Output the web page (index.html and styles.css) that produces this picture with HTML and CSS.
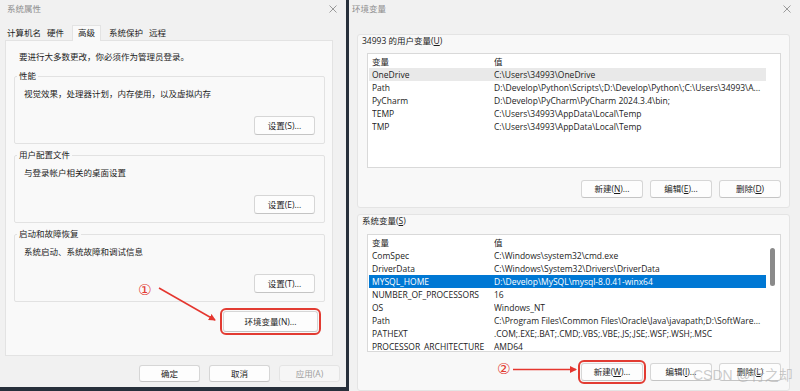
FILE: index.html
```html
<!DOCTYPE html>
<html lang="zh-CN">
<head>
    <meta charset="UTF-8">
    <title>系统属性 / 环境变量</title>
    <link rel="stylesheet" href="styles.css">
</head>
<body>
    <div class="desk">
        <!-- 系统属性 -->
        <section class="dlg sys">
            <header class="title">
                <span>系统属性</span>
                <svg class="close" width="8" height="8" viewBox="0 0 8 8"><path d="M0.5 0.5L7.5 7.5M7.5 0.5L0.5 7.5"/></svg>
            </header>
            <nav class="tabs">
                <span>计算机名</span><span>硬件</span><span class="on">高级</span><span>系统保护</span><span>远程</span>
            </nav>
            <div class="panel">
                <p class="note">要进行大多数更改，你必须作为管理员登录。</p>
                <fieldset class="grp">
                    <legend>性能</legend>
                    <p>视觉效果，处理器计划，内存使用，以及虚拟内存</p>
                    <div class="act"><button class="btn">设置(S)...</button></div>
                </fieldset>
                <fieldset class="grp">
                    <legend>用户配置文件</legend>
                    <p>与登录帐户相关的桌面设置</p>
                    <div class="act"><button class="btn">设置(E)...</button></div>
                </fieldset>
                <fieldset class="grp">
                    <legend>启动和故障恢复</legend>
                    <p>系统启动、系统故障和调试信息</p>
                    <div class="act"><button class="btn">设置(T)...</button></div>
                </fieldset>
                <div class="act env-act"><button class="btn big mark">环境变量(N)...</button></div>
            </div>
            <footer class="foot">
                <button class="btn">确定</button>
                <button class="btn">取消</button>
                <button class="btn" disabled>应用(A)</button>
            </footer>
        </section>

        <!-- 环境变量 -->
        <section class="dlg env">
            <header class="title">
                <span>环境变量</span>
                <svg class="close" width="8" height="8" viewBox="0 0 8 8"><path d="M0.5 0.5L7.5 7.5M7.5 0.5L0.5 7.5"/></svg>
            </header>
            <div class="env-body">
                <div class="box">
                    <div class="cap">34993 的用户变量(<u>U</u>)</div>
                    <div class="list user">
                        <div class="rows">
                            <div class="row"><span>变量</span><span>值</span></div>
                            <div class="row hl"><span>OneDrive</span><span>C:\Users\34993\OneDrive</span></div>
                            <div class="row"><span>Path</span><span>D:\Develop\Python\Scripts\;D:\Develop\Python\;C:\Users\34993\A...</span></div>
                            <div class="row"><span>PyCharm</span><span>D:\Develop\PyCharm\PyCharm 2024.3.4\bin;</span></div>
                            <div class="row"><span>TEMP</span><span>C:\Users\34993\AppData\Local\Temp</span></div>
                            <div class="row"><span>TMP</span><span>C:\Users\34993\AppData\Local\Temp</span></div>
                        </div>
                        <div class="sb"></div>
                    </div>
                    <div class="act btns">
                        <button class="btn">新建(<u>N</u>)...</button>
                        <button class="btn">编辑(<u>E</u>)...</button>
                        <button class="btn">删除(<u>D</u>)</button>
                    </div>
                </div>
                <div class="box sysvars">
                    <div class="cap">系统变量(<u>S</u>)</div>
                    <div class="list system">
                        <div class="rows">
                            <div class="row"><span>变量</span><span>值</span></div>
                            <div class="row"><span>ComSpec</span><span>C:\Windows\system32\cmd.exe</span></div>
                            <div class="row"><span>DriverData</span><span>C:\Windows\System32\Drivers\DriverData</span></div>
                            <div class="row sel"><span>MYSQL_HOME</span><span>D:\Develop\MySQL\mysql-8.0.41-winx64</span></div>
                            <div class="row"><span>NUMBER_OF_PROCESSORS</span><span>16</span></div>
                            <div class="row"><span>OS</span><span>Windows_NT</span></div>
                            <div class="row"><span>Path</span><span>C:\Program Files\Common Files\Oracle\Java\javapath;D:\SoftWare...</span></div>
                            <div class="row"><span>PATHEXT</span><span>.COM;.EXE;.BAT;.CMD;.VBS;.VBE;.JS;.JSE;.WSF;.WSH;.MSC</span></div>
                            <div class="row"><span>PROCESSOR_ARCHITECTURE</span><span>AMD64</span></div>
                        </div>
                        <div class="sb"><div class="thumb"></div></div>
                    </div>
                    <div class="act btns">
                        <button class="btn mark">新建(<u>W</u>)...</button>
                        <button class="btn">编辑(<u>I</u>)...</button>
                        <button class="btn">删除(<u>L</u>)</button>
                    </div>
                </div>
            </div>
        </section>

        <!-- 标注 -->
        <svg class="notes" width="800" height="391" viewBox="0 0 800 391">
            <defs>
                <marker id="tip" markerWidth="8" markerHeight="8" refX="6" refY="4" orient="auto" markerUnits="userSpaceOnUse">
                    <path d="M0 0.5L7 4L0 7.5Z" fill="#e5362f"/>
                </marker>
            </defs>
            <line x1="159" y1="288" x2="215" y2="320" marker-end="url(#tip)"/>
            <line x1="513" y1="369.5" x2="576" y2="369.5" marker-end="url(#tip)"/>
        </svg>
        <span class="num n1">①</span>
        <span class="num n2">②</span>
        <span class="wm">CSDN @行之却</span>
    </div>
</body>
</html>
```

FILE: styles.css
```css
* { box-sizing: border-box; }
html, body { margin: 0; padding: 0; }
body {
    width: 800px; height: 391px; overflow: hidden;
    background: #27303b;
    font-family: "Open Sans", "Noto Sans CJK SC", sans-serif;
    font-size: 8.5px; color: #1c1c1c;
}
.desk { position: relative; display: flex; gap: 3px; height: 391px; }

/* ---------- 对话框公共 ---------- */
.dlg { background: #f1f1f1; display: flex; flex-direction: column; }
.sys { width: 346px; height: 387px; }
.env { flex: 1; height: 391px; }
.title {
    display: flex; justify-content: space-between; align-items: center;
    height: 17px; padding: 0 9px 0 7px; color: #8e8e8e; line-height: 12px;
}
.env .title { padding: 0 9px 0 3px; }
.close path { stroke: #9a9a9a; stroke-width: 1; fill: none; }

.btn {
    font: inherit; color: #1c1c1c;
    background: #fdfdfd;
    border: 1px solid #d6d6d6; border-bottom-color: #c4c4c4;
    border-radius: 3px;
    padding: 0; width: 61px; height: 19px; line-height: 15px;
}
.btn:disabled { color: #9d9d9d; background: #f6f6f6; border-color: #e4e4e4; }
.btn u { text-underline-offset: 1px; }
.mark { outline: 2px solid #e23b32; outline-offset: 1px; }
.act { display: flex; justify-content: flex-end; }

/* ---------- 系统属性 ---------- */
.tabs {
    display: flex; align-items: flex-start;
    height: 15px; margin-top: 8px; padding-left: 4px;
    line-height: 15px; position: relative; z-index: 1;
}
.tabs span { padding: 0 3px; }
.tabs .on {
    padding: 0 5px; margin: 0 5px; height: 16px;
    background: #f9f9f9; border: 1px solid #e3e3e3; border-bottom: none;
    line-height: 14px;
}
.panel {
    height: 316px; margin: 0 13px 0 5px;
    padding: 0 7px 0 8px;
    background: #f9f9f9; border: 1px solid #e3e3e3;
}
.note { margin: 0; padding: 10px 0 0 5px; line-height: 12px; }
.grp {
    margin: 5px 0 0; padding: 0 9px 8px;
    border: 1px solid #e2e2e2; border-radius: 2px;
}
.grp:first-of-type { margin-top: 7px; }
.grp legend { margin-left: -7px; padding: 0 2px; line-height: 12px; }
.grp p { margin: 6px 0 0; line-height: 12px; }
.grp .act { margin-top: 16px; }
.env-act { margin-top: 9px; padding-right: 7px; }
.env-act .btn { width: 95px; height: 21px; }
.foot { display: flex; justify-content: flex-end; gap: 9px; padding: 9px 6px 0 0; }
.foot .btn { height: 17px; line-height: 13px; }

/* ---------- 环境变量 ---------- */
.env-body { padding: 17px 10px 0 8px; flex: 1; display: flex; flex-direction: column; }
.box {
    background: #f8f8f8; border: 1px solid #e4e4e4; border-radius: 3px;
    padding: 0 8px 9px 9px;
}
.sysvars { margin-top: 6px; flex: 1; }
.cap { margin-left: -5px; line-height: 12px; }
.list {
    display: flex; margin-top: 6px; height: 115px;
    background: #fff; border: 1px solid #d9d9d9; padding: 1px;
    overflow: hidden;
}
.system { margin-top: 7px; height: 118px; }
.rows { flex: 1; min-width: 0; }
.row {
    display: grid; grid-template-columns: 122px 1fr;
    padding-left: 3px; line-height: 13px; height: 13px;
    white-space: nowrap; overflow: hidden;
}
.row span { overflow: hidden; }
.row.hl { background: #e9e9e9; }
.row.sel { background: #0078d4; color: #fff; }
.sb { width: 13px; }
.thumb { width: 5px; height: 38px; margin: 12px 0 0 4px; background: #8a8a8a; border-radius: 3px; }
.btns { gap: 7px; margin-top: 12px; }
.system + .btns { margin-top: 11px; }
.btns .btn { width: 62px; height: 18px; line-height: 14px; }

/* ---------- 标注 ---------- */
.notes { position: absolute; left: 0; top: 0; pointer-events: none; }
.notes line { stroke: #e5362f; stroke-width: 1.6; }
.num {
    position: absolute; color: #e23b32;
    font-family: "DejaVu Sans", sans-serif; font-size: 15px; line-height: 15px;
}
.n1 { left: 138px; top: 283px; }
.n2 { left: 497px; top: 362px; }
.wm {
    position: absolute; left: 693px; top: 367px;
    font-family: "Liberation Sans", "Noto Sans CJK SC", sans-serif;
    font-size: 14px; line-height: 16px; color: rgba(170,170,170,0.6);
    white-space: nowrap;
}
```
